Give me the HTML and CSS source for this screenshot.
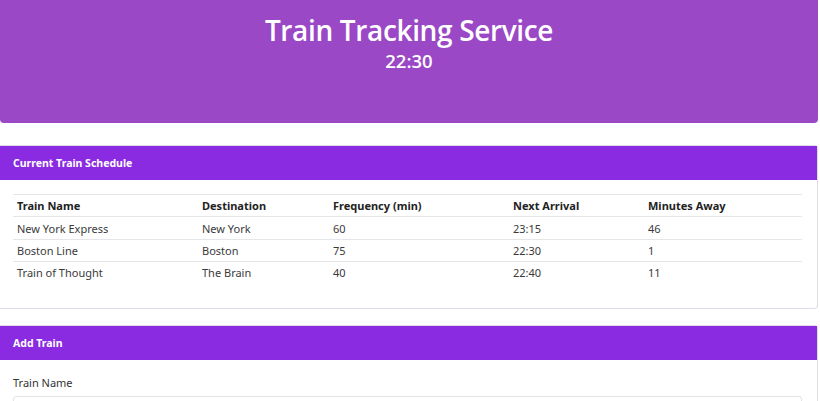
FILE: index.html
```html
<!DOCTYPE html>
<html>
<head>
<meta charset="utf-8">
<link rel="stylesheet" href="styles.css">
</head>
<body>
<div class="page">
  <header class="hero">
    <h1 class="hero-title">Train Tracking Service</h1>
    <div class="hero-time">22:30</div>
  </header>

  <section class="card schedule">
    <div class="card-header">Current Train Schedule</div>
    <div class="card-body">
      <table class="table">
        <thead>
          <tr><th class="c1">Train Name</th><th class="c2">Destination</th><th class="c3">Frequency (min)</th><th class="c4">Next Arrival</th><th class="c5">Minutes Away</th></tr>
        </thead>
        <tbody>
          <tr><td>New York Express</td><td>New York</td><td>60</td><td>23:15</td><td>46</td></tr>
          <tr><td>Boston Line</td><td>Boston</td><td>75</td><td>22:30</td><td>1</td></tr>
          <tr><td>Train of Thought</td><td>The Brain</td><td>40</td><td>22:40</td><td>11</td></tr>
        </tbody>
      </table>
    </div>
  </section>

  <section class="card add">
    <div class="card-header">Add Train</div>
    <div class="card-body form">
      <label class="label">Train Name</label>
      <div class="input"></div>
    </div>
  </section>
</div>
</body>
</html>
```
FILE: styles.css
```css
html, body {
  margin: 0;
  padding: 0;
  background: #fff;
}
body {
  font-family: "Noto Sans", "Open Sans", sans-serif;
  color: #212529;
}
.page {
  width: 818px;
}
.hero {
  background: #9a48c6;
  height: 123px;
  border-radius: 0 0 4px 4px;
  box-sizing: border-box;
  padding-top: 12px;
  text-align: center;
  color: #fff;
}
.hero-title {
  margin: 0;
  font-family: "Open Sans", "Noto Sans", sans-serif;
  font-weight: 600;
  font-size: 28px;
  line-height: 36px;
  letter-spacing: -0.35px;
}
.hero-time {
  font-family: "Open Sans", "Noto Sans", sans-serif;
  font-size: 18.5px;
  font-weight: 600;
  line-height: 26px;
}
.card {
  border: 1px solid #e1dde6;
  border-left: none;
  border-radius: 0 4px 4px 0;
  background: #fff;
}
.schedule {
  margin-top: 22px;
}
.add {
  margin-top: 16px;
}
.card-header {
  background: #8a2be2;
  color: #fff;
  font-weight: 700;
  font-size: 10.5px;
  height: 34px;
  line-height: 34px;
  padding-left: 13px;
}
.card-body {
  padding: 14px 15px 0 13px;
}
.schedule .card-body {
  height: 127.5px;
  box-sizing: border-box;
}
.table {
  width: 789px;
  border-collapse: collapse;
  font-size: 11px;
  color: #3a3a3a;
}
.table th, .table td {
  text-align: left;
  padding: 0 4px;
  border-top: 1px solid #e4e6ea;
  height: 21.4px;
  white-space: nowrap;
}
.table th {
  font-weight: 700;
  color: #222;
}
.c1 { width: 177px; }
.c2 { width: 123px; }
.c3 { width: 172px; }
.c4 { width: 127px; }
.form {
  padding-top: 15px;
}
.label {
  display: block;
  font-size: 11px;
  color: #333;
  line-height: 16px;
}
.input {
  margin-top: 5px;
  width: 789px;
  height: 30px;
  border: 1px solid #dfe2e6;
  border-radius: 3px;
  box-sizing: border-box;
}
```
